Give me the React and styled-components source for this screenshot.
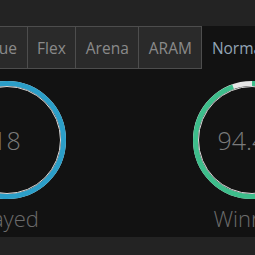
import React from 'react';
import styled, { createGlobalStyle } from 'styled-components';

const GlobalStyle = createGlobalStyle`
    html, body {
        margin: 0;
        padding: 0;
        background: #232323;
        overflow: hidden;
        font-family: "Open Sans", "Noto Sans", sans-serif;
    }
`

const Page = styled.div`
    width: 255px;
    height: 255px;
    overflow: hidden;
    display: flex;
    flex-direction: column;
    background: #232323;
`

const Header = styled.div`
    height: 26px;
    flex-shrink: 0;
`

const TabRow = styled.div`
    display: flex;
    margin-left: -76px;
    flex-shrink: 0;
`

const Tab = styled.div`
    height: 41px;
    display: flex;
    align-items: center;
    padding: 0 9.5px;
    font-size: 15.5px;
    white-space: nowrap;
    color: ${p => (p.active ? '#93a5b6' : '#8a8a8a')};
    background: ${p => (p.active ? '#121212' : '#2a2a2a')};
    border-top: 1px solid ${p => (p.active ? '#121212' : '#4d4d4d')};
    border-bottom: 1px solid ${p => (p.active ? '#121212' : '#4d4d4d')};
    border-right: 1px solid ${p => (p.active ? '#121212' : '#4d4d4d')};
`

const Body = styled.div`
    background: #121212;
    height: 168px;
    flex-shrink: 0;
    padding-top: 12px;
    box-sizing: border-box;
`

const Stats = styled.div`
    display: grid;
    grid-template-columns: 140px 140px;
    column-gap: 105.5px;
    margin-left: -63.5px;
`

const Stat = styled.div`
    display: flex;
    flex-direction: column;
    align-items: center;
`

const Ring = styled.div`
    position: relative;
    width: 118px;
    height: 118px;

    svg {
        display: block;
    }
`

const Value = styled.div`
    position: absolute;
    inset: 0;
    display: flex;
    align-items: center;
    justify-content: center;
    font-size: 25px;
    font-weight: 300;
    color: #7b7b7b;
`

const Label = styled.div`
    margin-top: 4px;
    font-size: 22px;
    font-weight: 300;
    color: #6c6c6c;
    white-space: nowrap;
`

const Footer = styled.div`
    flex: 1;
    background: #232323;
`

const tabs = ['Solo Queue', 'Flex', 'Arena', 'ARAM', 'Normal'];

const CircleStat = ({ value, label, percent, color }) => {
    const r = 56.5;
    const c = 2 * Math.PI * r;
    return (
        <Stat>
            <Ring>
                <svg width="118" height="118" viewBox="0 0 118 118">
                    <circle cx="59" cy="59" r={r} fill="none" stroke="#e6e6e6" strokeWidth="5" />
                    <circle
                        cx="59"
                        cy="59"
                        r={r}
                        fill="none"
                        stroke={color}
                        strokeWidth="5"
                        strokeDasharray={`${c * percent} ${c}`}
                        transform="rotate(-90 59 59)"
                    />
                    <circle cx="59" cy="59" r="53.5" fill="none" stroke="#dcdcdc" strokeWidth="1" />
                </svg>
                <Value>{value}</Value>
            </Ring>
            <Label>{label}</Label>
        </Stat>
    );
};

const App = () => (
    <Page>
        <GlobalStyle />
        <Header />
        <TabRow>
            {tabs.map(t => (
                <Tab key={t} active={t === 'Normal' ? 1 : 0}>{t}</Tab>
            ))}
        </TabRow>
        <Body>
            <Stats>
                <CircleStat value="18" label="Played" percent={1} color="#2b9ec8" />
                <CircleStat value="94.4%" label="Winrate" percent={0.944} color="#3dbd8b" />
            </Stats>
        </Body>
        <Footer />
    </Page>
);

export default App;
